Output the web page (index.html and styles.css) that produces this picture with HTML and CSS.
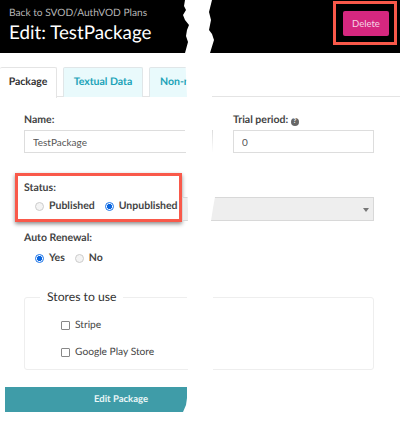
FILE: index.html
```html
<!doctype html>
<html lang="en">
<head>
    <meta charset="UTF-8">
    <title>Edit: TestPackage</title>
    <link rel="stylesheet" href="styles.css">
</head>
<body>
<div class="header">
    <div class="titles">
        <div class="back">Back to SVOD/AuthVOD Plans</div>
        <h1>Edit: TestPackage</h1>
    </div>
    <div class="callout delete-box">
        <button class="delete">Delete</button>
    </div>
</div>

<ul class="tabs">
    <li class="cur">Package</li>
    <li>Textual Data</li>
    <li class="cut">Non-r</li>
</ul>

<div class="form">
    <div class="row first">
        <div class="col-left">
            <label class="name">Name:</label>
            <input class="text" type="text" value="TestPackage">
        </div>
        <div class="col-right">
            <label class="name">Trial period: <span class="help">?</span></label>
            <input class="text" type="text" value="0">
        </div>
    </div>

    <div class="row second">
        <div class="callout status-box">
            <label class="name">Status:</label>
            <div class="choices">
                <span class="radio"></span><span class="choice">Published</span>
                <span class="radio on"></span><span class="choice">Unpublished</span>
            </div>
        </div>
        <div class="select"><span class="caret"></span></div>
    </div>

    <div class="renewal">
        <label class="name">Auto Renewal:</label>
        <div class="choices">
            <span class="radio on"></span><span class="choice">Yes</span>
            <span class="radio"></span><span class="choice">No</span>
        </div>
    </div>

    <div class="stores">
        <div class="legend">Stores to use</div>
        <div class="store"><span class="check"></span>Stripe</div>
        <div class="store"><span class="check"></span>Google Play Store</div>
    </div>
</div>

<div class="submit">Edit Package</div>

<!-- torn strip running over the whole shot -->
<svg class="tear" viewBox="0 0 400 431" width="400" height="431">
    <polygon fill="#fff" points="185,0 184,6 186,10 183,15 185,20 189,25 187,30 186,36 188,42 185,53 187,97 185,130 186,153 187,180 188,210 187,297 188,370 188,387 189,392 187,398 186,405 183,412 184,431 212,431 213,370 213,297 212,240 211,221 213,208 215,197 213,153 212,130 212,97 210,53 214,40 212,34 209,30 211,20 209,12 212,0"/>
</svg>
</body>
</html>
```

FILE: styles.css
```css
*{
    margin: 0;
    padding: 0;
    box-sizing: border-box;
    list-style: none;
}
body{
    width: 400px;
    height: 431px;
    overflow: hidden;
    position: relative;
    background: #fff;
    font-family: Lato, "Open Sans", sans-serif;
    text-rendering: geometricPrecision;
    color: #333;
}
.header{
    height: 53px;
    background: #000;
    display: flex;
    justify-content: space-between;
    padding: 1px 3px 0 9px;
}
.back{
    margin-top: 5px;
    font-size: 10.2px;
    line-height: 14px;
    color: #b5b5b5;
}
.header h1{
    font-size: 18.8px;
    line-height: 26px;
    font-weight: 400;
    color: #fff;
}
.callout{
    border: 3px solid #f9594a;
}
.delete-box{
    width: 64px;
    height: 44px;
    padding: 7px;
}
.delete{
    display: block;
    width: 46px;
    height: 25px;
    border: 0;
    border-radius: 2px;
    background: #d6277f;
    color: #f6d5e6;
    font-family: inherit;
    font-size: 9.5px;
}
.tabs{
    display: flex;
    gap: 6px;
    margin-top: 14px;
    height: 30px;
    border-bottom: 1px solid #e4e4e4;
    font-size: 10.5px;
    font-weight: 700;
}
.tabs li{
    width: 80px;
    height: 30px;
    line-height: 28px;
    text-align: center;
    color: #1ba3b8;
    background: #e9fafc;
    border: 1px solid #e0e6e8;
    border-bottom: 0;
    border-radius: 2px 2px 0 0;
}
.tabs li.cur{
    width: 57px;
    background: #fff;
    color: #333;
    border-color: #e4e4e4;
    border-left: 0;
    height: 31px;
}
.tabs li.cut{
    width: 50px;
    text-align: left;
    padding-left: 10px;
}
.form{
    padding: 16px 26px 0 24px;
}
.name{
    display: block;
    font-size: 10.5px;
    line-height: 14px;
    font-weight: 700;
    color: #444;
}
.row{
    display: flex;
}
.col-left{
    width: 189px;
}
.col-right{
    width: 141px;
    margin-left: 20px;
}
.text{
    display: block;
    width: 100%;
    height: 23px;
    margin-top: 3px;
    padding: 0 8px;
    border: 1px solid #ddd;
    font-family: inherit;
    font-size: 10px;
    color: #555;
}
.help{
    display: inline-block;
    width: 8px;
    height: 8px;
    border-radius: 50%;
    background: #666;
    color: #fff;
    font-size: 6.5px;
    line-height: 8px;
    text-align: center;
    vertical-align: 0;
}
.second{
    margin-top: 20px;
    align-items: flex-end;
}
.status-box{
    width: 167px;
    height: 49px;
    margin-left: -9px;
    padding: 5px 0 0 6px;
    box-shadow: 0 2px 4px rgba(0,0,0,.45);
    flex: none;
}
.select{
    flex: 1;
    height: 24px;
    background: #eee;
    border: 1px solid #d8d8d8;
    margin-bottom: 1px;
    position: relative;
}
.caret{
    position: absolute;
    right: 4px;
    top: 10px;
    border: 3px solid transparent;
    border-top: 4px solid #777;
    border-bottom: 0;
}
.choices{
    display: flex;
    align-items: center;
    height: 14px;
    margin-top: 4px;
    padding-left: 11px;
    font-size: 10.5px;
    font-weight: 700;
    color: #444;
}
.radio{
    flex: none;
    width: 9px;
    height: 9px;
    border-radius: 50%;
    border: 1px solid #ccc;
    background: #f4f4f4;
    margin-right: 5px;
}
.radio.on{
    border-color: #1a73e8;
    background: radial-gradient(circle, #0a66e0 0 2.4px, #fff 2.9px);
}
.choice{
    margin-right: 10px;
}
.renewal{
    margin-top: 9px;
}
.renewal .choices{
    margin-top: 6px;
}
.stores{
    height: 73px;
    margin-top: 32px;
    padding: 18px 0 0 36px;
    border: 1px solid #eee;
    border-radius: 3px;
    position: relative;
}
.legend{
    position: absolute;
    left: 15px;
    top: -10px;
    padding: 0 7px;
    background: #fff;
    font-size: 12.2px;
    line-height: 18px;
    color: #333;
}
.store{
    display: flex;
    align-items: center;
    height: 18px;
    margin-bottom: 9px;
    font-size: 10.2px;
    color: #444;
}
.check{
    flex: none;
    width: 9px;
    height: 9px;
    border: 1px solid #888;
    border-radius: 1px;
    margin-right: 5px;
}
.submit{
    width: 182px;
    height: 25px;
    margin: 17px 0 0 5px;
    padding-left: 50px;
    background: #3f9ca8;
    color: #eaf6f7;
    font-size: 9.5px;
    font-weight: 700;
    line-height: 25px;
    text-align: center;
}
.tear{
    position: absolute;
    left: 0;
    top: 0;
}
```
